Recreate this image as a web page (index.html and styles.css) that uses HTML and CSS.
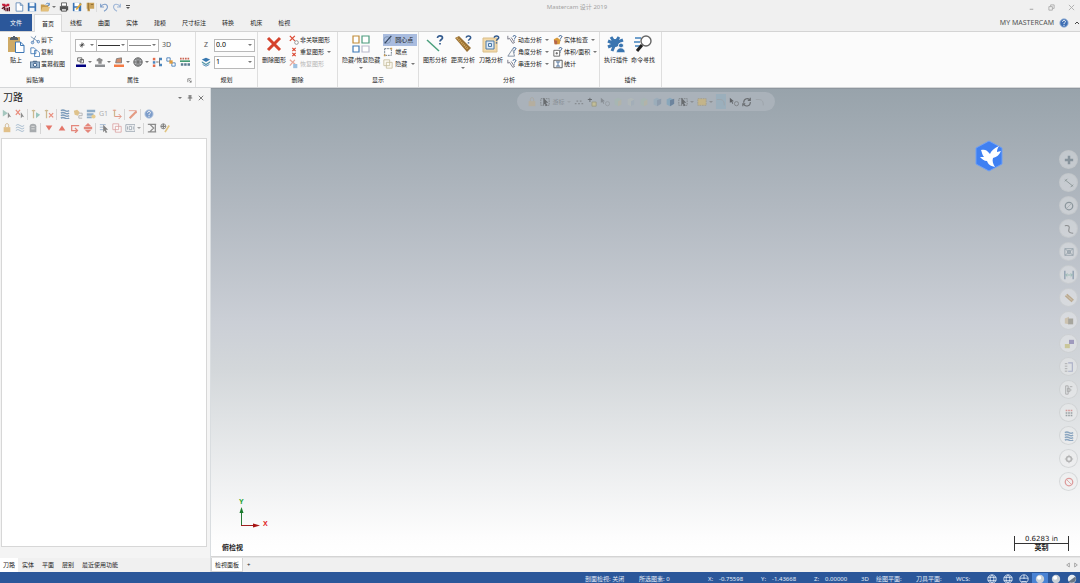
FILE: index.html
```html
<!DOCTYPE html>
<html lang="zh-CN">
<head>
<meta charset="utf-8">
<title>Mastercam 设计 2019</title>
<link rel="stylesheet" href="styles.css">
</head>
<body>
<svg class="sprite" aria-hidden="true">
  <symbol id="logo" viewBox="0 0 12 12"><path d="M1 2h4l1 2 1-2h3v3H7L6 7 5 5H2z" fill="#c41e3a"/><path d="M1 8l3-2v4M6 7v4M8 7v4M10 6v5" stroke="#5b1020" stroke-width="1.5" fill="none"/></symbol>
  <symbol id="new" viewBox="0 0 12 12"><path d="M2.500 1h5l3 3v7h-8zM7.500 1v3h3" fill="#fff" stroke="#5b86b5"/></symbol>
  <symbol id="save" viewBox="0 0 12 12"><path d="M1 1h9l1 1v9H1z" fill="#3b74b5"/><path d="M3 1h6v4H3zM3 7h6v4H3z" fill="#f2f6fa"/></symbol>
  <symbol id="open" viewBox="0 0 12 12"><path d="M1 3h4l1 1h4v7H1z" fill="#c79b4c"/><path d="M1 11l2-5h9l-2 5z" fill="#e4c07a"/><path d="M7 3c1-2 3-2 4 0M11 1v3H9" stroke="#3b74b5" fill="none"/></symbol>
  <symbol id="print" viewBox="0 0 12 12"><path d="M3 1h6v4H3z" fill="#fff" stroke="#555"/><path d="M1 5h10v5H1z" fill="#555"/><path d="M3 8h6v3H3z" fill="#ddd" stroke="#444"/></symbol>
  <symbol id="savepen" viewBox="0 0 12 12"><path d="M1 1h10v10H1z" fill="#3b74b5"/><path d="M3 1h6v4H3zM3 7h5v4H3z" fill="#fff"/><path d="M5 9l6-7" stroke="#e2a838" stroke-width="2"/></symbol>
  <symbol id="zip" viewBox="0 0 12 12"><path d="M2 1h9v7H6v3H3V8H2z" fill="#c9a25a"/><path d="M4 1v9M7 3h3" stroke="#8c6930"/></symbol>
  <symbol id="undo" viewBox="0 0 12 12"><path d="M2 2v4h4M2 6c3-5 9-4 8 1-.5 2-2 3-4 4" fill="none" stroke="#7c9cc8" stroke-width="1.300"/></symbol>
  <symbol id="redo" viewBox="0 0 12 12"><path d="M10 2v4H6M10 6C7 1 1 2 2 7c.5 2 2 3 4 4" fill="none" stroke="#9db5d6" stroke-width="1.300"/></symbol>
  <symbol id="help" viewBox="0 0 12 12"><circle cx="6" cy="6" r="5" fill="#3f6fb4" stroke="#9fb8da"/><path d="M4.300 4.500c0-2.300 3.600-2.200 3.400 0C7.600 5.600 6 5.600 6 7.200M6 8.200v1.200" stroke="#fff" fill="none" stroke-width="1.200"/></symbol>
  <symbol id="paste" viewBox="0 0 18 18"><path d="M1 2h12v15H1z" fill="#cfaa66"/><path d="M4 3V2h2V1h2v1h2v1h1v2H3V3z" fill="#55606c"/><path d="M8.500 7h5l3.500 3.500V17.500H8.500zM13.500 7v3.500H17" fill="#fff" stroke="#3e77b5"/></symbol>
  <symbol id="cut" viewBox="0 0 12 12"><path d="M1 2l9 6M3 9l4-8" stroke="#6f8cab"/><circle cx="3" cy="9" r="1.500" fill="none" stroke="#3b74b5"/><circle cx="10" cy="8" r="1.500" fill="none" stroke="#3b74b5"/></symbol>
  <symbol id="copy" viewBox="0 0 12 12"><path d="M1 1h4l2 2v5H1zM5.500 4h3l3 3v4.500h-6z" fill="#fff" stroke="#3e77b5"/></symbol>
  <symbol id="cam" viewBox="0 0 12 12"><path d="M0 3h3l1-1h4l1 1h3v8H0z" fill="#53708f"/><path d="M1 4h10v6H1z" fill="#9fb9d3"/><circle cx="6" cy="7" r="2" fill="#fff" stroke="#244a78"/></symbol>
  <symbol id="star" viewBox="0 0 12 12"><path d="M6 3v6M3 6h6M4 8l4-4" stroke="#333"/></symbol>
  <symbol id="wirecolor" viewBox="0 0 12 12"><path d="M2 1h5v4H2zM5 3h4v4H5z" fill="#fff" stroke="#555"/><path d="M0 9h12v3H0z" fill="#000080"/></symbol>
  <symbol id="solidcolor" viewBox="0 0 12 12"><path d="M2 3l3-2 4 2v2H8v3H4V5H2z" fill="#8b8b8b"/><path d="M0 9h12v3H0z" fill="#8a8d90"/></symbol>
  <symbol id="surfcolor" viewBox="0 0 12 12"><path d="M3 2l6-1v6H2z" fill="#ce8c6d" stroke="#777"/><path d="M0 9h12v3H0z" fill="#f47b45"/></symbol>
  <symbol id="globe" viewBox="0 0 12 12"><circle cx="6" cy="6" r="5" fill="#b5b8bb" stroke="#444"/><path d="M1 6h10M6 1v10M3 2c3 3 3 5 0 8M9 2c-3 3-3 5 0 8" fill="none" stroke="#666"/></symbol>
  <symbol id="attr1" viewBox="0 0 12 12"><path d="M1 1h3v3H1z" fill="#e46c4c"/><path d="M1 5h3v3H1z" fill="#4c86bd"/><path d="M1 9h3v3H1z" fill="#e46c4c"/><path d="M5 6h3M9 1v10" stroke="#555"/><path d="M9 1h3v3H9zM9 8h3v3H9z" fill="#4c86bd"/></symbol>
  <symbol id="attr2" viewBox="0 0 12 12"><path d="M1 1h4v4H1zM7 7h4v4H7z" fill="#fff" stroke="#3d77b3"/><path d="M4 4h4v4H4z" fill="#df9b3e"/></symbol>
  <symbol id="attr3" viewBox="0 0 12 12"><path d="M0 2h12" stroke="#cc6655" stroke-width="2" stroke-dasharray="2 1"/><path d="M0 5h12" stroke="#449c72" stroke-width="2"/><path d="M1 9h3M5 9h3M9 9h3" stroke="#5a7a90" stroke-width="3"/></symbol>
  <symbol id="layers" viewBox="0 0 12 12"><path d="M1 3l5-2 5 2-5 3z" fill="#3878b0"/><path d="M1 5l5 3 5-3v2l-5 3-5-3z" fill="#5596a8"/><path d="M2 9l4 2 4-2" fill="none" stroke="#3878b0"/></symbol>
  <symbol id="bigx" viewBox="0 0 18 18"><path d="M3 3l12 12M15 3L3 15" stroke="#d5432d" stroke-width="3"/></symbol>
  <symbol id="delA" viewBox="0 0 12 12"><path d="M1 1l6 6M7 1L1 7" stroke="#dc4b35" stroke-width="1.500"/><circle cx="9" cy="9" r="2.200" fill="#fff" stroke="#888"/></symbol>
  <symbol id="delB" viewBox="0 0 12 12"><path d="M4 1l4 4M8 1L4 5M4 7l4 4M8 7l-4 4" stroke="#dc4b35" stroke-width="1.500"/></symbol>
  <symbol id="delC" viewBox="0 0 12 12"><path d="M1 1l7 6M7 1L1 8" stroke="#e6a79a" stroke-width="1.500"/><path d="M5 6h5v5H5z" fill="#9dc0e0"/></symbol>
  <symbol id="hide4" viewBox="0 0 18 18" fill="#fff" stroke-width="1.200"><path d="M1 1h6v7H1z" stroke="#c08b39"/><path d="M10 1h7v7h-7z" stroke="#4c9b7e"/><path d="M1 11h6v6H1z" stroke="#3f79b5"/><path d="M10 11h7v6h-7z" stroke="#bbc"/></symbol>
  <symbol id="arcpt" viewBox="0 0 12 12"><circle cx="5" cy="6" r="4" fill="none" stroke="#7790b0"/><path d="M2 10l8-9" stroke="#33445e" stroke-width="1.500"/></symbol>
  <symbol id="endpt" viewBox="0 0 12 12"><path d="M2 2h8v8H2z" fill="#fff" stroke="#4f6171" stroke-dasharray="2 1"/><path d="M1 9h2v2H1zM9 1h2v2H9z" fill="#d09b49"/></symbol>
  <symbol id="blank" viewBox="0 0 12 12"><path d="M1 1h7v7H1zM4 4h7v7H4z" fill="#fcfaf2" stroke="#c5bd9e"/></symbol>
  <symbol id="q" viewBox="0 0 8 10"><path d="M1.500 3c0-3 5-2.500 5 0C6.500 4.500 4 4.500 4 6.500M4 8v1.500" fill="none" stroke="#345b8e" stroke-width="1.700"/></symbol>
  <symbol id="anaLine" viewBox="0 0 18 18"><path d="M1 5l12 11" stroke="#4a9f7c" stroke-width="1.500"/><use href="#q" x="10" y="0" width="8" height="10"/></symbol>
  <symbol id="anaDist" viewBox="0 0 18 18"><path d="M1 3l4-2 12 12-4 4z" fill="#987035"/><path d="M3 3l11 11" stroke="#d8ae63" stroke-dasharray="1 1" stroke-width="2"/><use href="#q" x="11" y="0" width="7" height="9"/></symbol>
  <symbol id="anaPath" viewBox="0 0 18 18"><path d="M1 3h14v14H1z" fill="#f2d9a9" stroke="#d9bd88"/><path d="M4 6h8v8H4z" fill="#dce9f5" stroke="#4c7aa8"/><path d="M6.500 8.500h3v3h-3z" fill="none" stroke="#4c7aa8"/><use href="#q" x="11" y="0" width="7" height="9"/></symbol>
  <symbol id="anaDyn" viewBox="0 0 12 12"><path d="M1 1v4l2-1 4 6 2-1-4-6" fill="#fff" stroke="#667"/><use href="#q" x="6" y="0" width="6" height="7"/></symbol>
  <symbol id="anaAng" viewBox="0 0 12 12"><path d="M7 2L1 11h8L7 3" fill="none" stroke="#718196"/><use href="#q" x="6" y="0" width="6" height="7"/></symbol>
  <symbol id="anaSolid" viewBox="0 0 12 12"><path d="M1 5l4-2 4 3-1 5H2z" fill="#d99b3c"/><path d="M1 6l4 1v4H2z" fill="#b5654a"/><use href="#q" x="6" y="0" width="6" height="7"/></symbol>
  <symbol id="anaVol" viewBox="0 0 12 12"><path d="M1 4h7v7H1z" fill="#fff" stroke="#555"/><path d="M3 7.500h3M4.500 6v3" stroke="#555"/><use href="#q" x="6" y="0" width="6" height="7"/></symbol>
  <symbol id="stats" viewBox="0 0 12 12"><path d="M1 1.500h10v9H1z" fill="#fff" stroke="#444"/><path d="M3.500 3.500h5M6 3.500v5M3.500 8.500h5" stroke="#345b8e"/></symbol>
  <symbol id="addin" viewBox="0 0 18 18"><path d="M8 8L4 2M8 8L12 2M8 8l8-3M8 9L1 6M8 9l-7 3M8 9l-3 7" stroke="#3a75b0" stroke-width="3"/><circle cx="8" cy="8" r="4" fill="#3a75b0"/><circle cx="14" cy="10.500" r="2.500" fill="#3a75b0" stroke="#fbfbfb"/><path d="M9.500 17.500c0-6 8.500-6 8.500 0z" fill="#3a75b0" stroke="#fbfbfb" stroke-width=".5"/></symbol>
  <symbol id="find" viewBox="0 0 18 18"><path d="M1 3h6M0 7h6M1 11h5" stroke="#4383bd" stroke-width="1.400"/><circle cx="12" cy="6" r="5" fill="#fff" stroke="#666" stroke-width="1.400"/><path d="M8 10l-5 6" stroke="#222" stroke-width="3"/></symbol>
  <symbol id="selall" viewBox="0 0 12 12"><path d="M1 1l6 4-6 4z" fill="#7db0a4"/><path d="M7 4v7l2-2 2 1-3-5" fill="#555"/></symbol>
  <symbol id="selx" viewBox="0 0 12 12"><path d="M1 1l5 6M6 1L1 7" stroke="#e3563c" stroke-width="1.500"/><path d="M7 4v7l2-2 2 1-3-5" fill="#555"/></symbol>
  <symbol id="regen" viewBox="0 0 12 12"><path d="M3 1v10M1 2h4" stroke="#b99a5c" stroke-width="1.500"/><path d="M6 4l5 3-5 4z" fill="#67aca0"/></symbol>
  <symbol id="regx" viewBox="0 0 12 12"><path d="M3 1v10M1 2h4" stroke="#b99a5c" stroke-width="1.500"/><path d="M6 5l5 5M11 5l-5 5" stroke="#e3563c" stroke-width="1.500"/></symbol>
  <symbol id="waves" viewBox="0 0 12 12"><path d="M1 2q2.500-1.500 5 0t5 0M1 5q2.500-1.500 5 0t5 0M1 8q2.500-1.500 5 0t5 0M1 11q2.500-1.500 5 0t5 0" stroke="#3d6d9d" fill="none" stroke-width="1.700"/></symbol>
  <symbol id="thin" viewBox="0 0 12 12"><path d="M1 3q2.500-2.500 5 0t5 0M1 6q2.500-2.500 5 0t5 0M1 9q2.500-2.500 5 0t5 0" stroke="#6f93b5" fill="none"/></symbol>
  <symbol id="verify" viewBox="0 0 12 12"><path d="M1 2l4-1 3 3-2 4-4-1z" fill="#d5a955"/><path d="M7 5h4v3H7v3h4" fill="none" stroke="#999" stroke-width="1.200"/></symbol>
  <symbol id="sim" viewBox="0 0 12 12"><path d="M1 1h10v3H1zM1 5h8v3H1zM1 9h6v2H1z" fill="#5786b2"/><circle cx="9" cy="9" r="2.500" fill="#dfb75c"/></symbol>
  <symbol id="feed" viewBox="0 0 12 12"><path d="M3 1v8" stroke="#b99a5c" stroke-width="1.500"/><path d="M1 1.500h4M3 9h8M8 6l3 3-3 3" stroke="#dd6d53" fill="none" stroke-width="1.200"/></symbol>
  <symbol id="wand" viewBox="0 0 12 12"><path d="M2 11l8-8" stroke="#dc6b45" stroke-width="2.500"/><path d="M1 2h9v3" stroke="#dc6b55" fill="none"/></symbol>
  <symbol id="lock" viewBox="0 0 12 12"><path d="M2 5h8v6H2z" fill="#d7a550"/><path d="M4 5V3c0-3 4-3 4 0v2" stroke="#b18a4b" fill="none"/></symbol>
  <symbol id="ghost" viewBox="0 0 12 12"><path d="M2 11V4c0-4 8-4 8 0v7z" fill="#7f8589"/><path d="M4 4h4M4 7h4" stroke="#ddd"/></symbol>
  <symbol id="down" viewBox="0 0 12 12"><path d="M2 3h8l-4 6z" fill="#dd3320"/></symbol>
  <symbol id="up" viewBox="0 0 12 12"><path d="M2 9h8L6 3z" fill="#dd3320"/></symbol>
  <symbol id="insert" viewBox="0 0 12 12"><path d="M11 3H2v6h6M6 6l3 3-3 3" stroke="#dd4d3c" fill="none" stroke-width="1.500"/></symbol>
  <symbol id="scroll" viewBox="0 0 12 12"><path d="M6 0l4 4H2zM6 12l4-4H2z" fill="#dd4d3c"/><path d="M1 6h10" stroke="#dd4d3c" stroke-width="3"/></symbol>
  <symbol id="cursor" viewBox="0 0 12 12"><path d="M1 2h7M1 5h4M1 8h4" stroke="#5b86b5"/><path d="M5 2l6 6H8l2 3-2 1-1-3-2 2z" fill="#444"/></symbol>
  <symbol id="boxcursor" viewBox="0 0 12 12"><path d="M1 2h10v8H1z" fill="none" stroke="#555" stroke-dasharray="2 1"/><path d="M4 1l6 6H7l2 3-2 1-1-3-2 2z" fill="#333"/></symbol>
  <symbol id="stack" viewBox="0 0 12 12"><path d="M1 1h7v7H1zM4 4h7v7H4z" fill="#fff" stroke="#c77"/></symbol>
  <symbol id="cols" viewBox="0 0 12 12"><path d="M1 2h11v8H1z" fill="#fff" stroke="#678"/><path d="M3 4v4M5 4h3v4H5zM10 4v4" stroke="#678" fill="none"/></symbol>
  <symbol id="sheet" viewBox="0 0 12 12"><path d="M1 1.500h10M1 10.500h10M3 1l5 5-5 5M10 1v10" stroke="#555" stroke-width="1.500" fill="none"/></symbol>
  <symbol id="check" viewBox="0 0 12 12"><circle cx="4" cy="4" r="3" fill="#fff" stroke="#444"/><path d="M4 1v3H1M4 7V4h3" stroke="#444" stroke-width="1.500" fill="none"/><path d="M6 11l5-8" stroke="#d8ab45" stroke-width="2"/></symbol>
  <symbol id="pin" viewBox="0 0 8 8"><path d="M2 1h4M3 1v3M5 1v3M1 4h6M4 4v4" stroke="#666" stroke-width="1.200"/></symbol>
  <symbol id="close" viewBox="0 0 8 8"><path d="M1 1l6 6M7 1L1 7" stroke="currentColor"/></symbol>
  <symbol id="gold" viewBox="0 0 12 12"><path d="M1 2h10v8H1z" fill="#d8b763" stroke="#9a8c6b" stroke-dasharray="2 1"/></symbol>
  <symbol id="cube" viewBox="0 0 12 12"><path d="M2 3l4-2 4 2v6l-4 2-4-2z" fill="#c5c8b5"/><path d="M6 5l4-2v6l-4 2z" fill="#8fa5b4"/></symbol>
  <symbol id="cubeg" viewBox="0 0 12 12"><path d="M2 3l4-2 4 2v6l-4 2-4-2z" fill="#9fc49f"/><path d="M6 5l4-2v6l-4 2z" fill="#ccb97a"/></symbol>
  <symbol id="cubeb" viewBox="0 0 12 12"><path d="M2 3l4-2 4 2v6l-4 2-4-2z" fill="#6f9fbd"/><path d="M6 4l5-2v6l-5 3z" fill="#3c5f86"/></symbol>
  <symbol id="corner" viewBox="0 0 12 12"><path d="M1 3h5M3.500 1v5" stroke="#222"/><path d="M6 6h5v5H6z" fill="#d6c77c" stroke="#8c8455"/></symbol>
  <symbol id="invert" viewBox="0 0 12 12"><path d="M1 1l5 4-2 0 1 3-1 0-1-2-2 1z" fill="#222"/><circle cx="9" cy="8" r="2.500" fill="none" stroke="#555"/></symbol>
  <symbol id="rotate" viewBox="0 0 12 12"><path d="M2 7c0-6 6-6 8-3M10 1v3H7M10 6c0 6-7 6-8 2M1 11V8h3" fill="none" stroke="#333" stroke-width="1.300"/></symbol>
  <symbol id="arc" viewBox="0 0 12 12"><path d="M1 3h4c4 0 5 3 5 7" fill="none" stroke="#777"/></symbol>
  <symbol id="plus" viewBox="0 0 12 12"><path d="M6 1v10M1 6h10" stroke="#556874" stroke-width="3"/></symbol>
  <symbol id="line" viewBox="0 0 12 12"><path d="M1 2l10 8M1 4l3-3M8 11l3-3" stroke="#53645f"/></symbol>
  <symbol id="circ" viewBox="0 0 12 12"><circle cx="6" cy="6" r="4.500" fill="none" stroke="#596a72" stroke-width="1.500"/><path d="M3 9l6-6" stroke="#8b9799"/></symbol>
  <symbol id="spline" viewBox="0 0 12 12"><path d="M1 2c5-1 6 1 5 4s0 5 5 5" fill="none" stroke="#555" stroke-width="1.300"/></symbol>
  <symbol id="box" viewBox="0 0 12 12"><path d="M1 2h10v8H1zM1 2l10 8M11 2L1 10" fill="none" stroke="#667985"/><circle cx="6" cy="6" r="2" fill="none" stroke="#667985"/></symbol>
  <symbol id="dim" viewBox="0 0 12 12"><path d="M1 1v10M11 1v10" stroke="#4d6a88" stroke-width="1.500"/><path d="M2 6h8M4 4L2 6l2 2M8 4l2 2-2 2" stroke="#5b9b8b" fill="none"/></symbol>
  <symbol id="ruler" viewBox="0 0 12 12"><path d="M1 4l3-3 8 7-3 3z" fill="#a68551"/><path d="M3 3l7 6" stroke="#eee" stroke-dasharray="1 1"/></symbol>
  <symbol id="solid" viewBox="0 0 12 12"><path d="M1 3l5-2v9l-5-1z" fill="#c4b08b"/><path d="M5 3h6v7H5z" fill="#7f7a69"/></symbol>
  <symbol id="pair" viewBox="0 0 12 12"><path d="M6 1h6v5H6z" fill="#6f63a0"/><path d="M1 6h6v5H1z" fill="#bdb45f"/></symbol>
  <symbol id="list" viewBox="0 0 12 12"><path d="M5 1h5v10H5" fill="none" stroke="#8188b1" stroke-width="1.300"/><path d="M1 2h3M1 5h3M1 8h3M1 11h3" stroke="#777"/></symbol>
  <symbol id="tree" viewBox="0 0 12 12"><path d="M2 1h3v10H2zM7 2h3M7 6h2M4 4h3v4H4z" fill="none" stroke="#777"/></symbol>
  <symbol id="points" viewBox="0 0 12 12"><path d="M1 8h2M5 8h2M9 8h2M3 5h2M7 5h2" stroke="#555" stroke-width="1.500"/></symbol>
  <symbol id="grid" viewBox="0 0 12 12"><path d="M2 3h9" stroke="#c85b5b" stroke-width="2" stroke-dasharray="2 1"/><path d="M2 6h9M2 9h9" stroke="#5b676b" stroke-width="2" stroke-dasharray="2 1"/></symbol>
  <symbol id="gear" viewBox="0 0 12 12"><circle cx="6" cy="6" r="3" fill="none" stroke="#888" stroke-width="2"/><path d="M6 1v2M6 9v2M1 6h2M9 6h2" stroke="#888"/></symbol>
  <symbol id="no" viewBox="0 0 12 12"><circle cx="6" cy="6" r="4.500" fill="none" stroke="#cf5757" stroke-width="1.500"/><path d="M3 3l6 6" stroke="#cf5757"/></symbol>
  <symbol id="wire" viewBox="0 0 12 12"><circle cx="6" cy="6" r="5" fill="none" stroke="#e6eef8"/><path d="M1 4h10M1 8h10M6 1c-3 3-3 7 0 10M6 1c3 3 3 7 0 10" fill="none" stroke="#e6eef8"/></symbol>
  <symbol id="wirehalf" viewBox="0 0 12 12"><circle cx="6" cy="6" r="5" fill="none" stroke="#e6eef8"/><path d="M1 5h10M6 1v5M3 9h6" fill="none" stroke="#e6eef8"/></symbol>
  <symbol id="ball" viewBox="0 0 12 12"><circle cx="6" cy="6" r="5" fill="#c9d0d7"/><circle cx="5" cy="4.500" r="2.500" fill="#fff"/></symbol>
  <symbol id="ballhalf" viewBox="0 0 12 12"><circle cx="6" cy="6" r="5" fill="#e7ecf1"/><path d="M10 3c3 6-4 10-8 6z" fill="#6b7786"/></symbol>
</svg>

<div class="app">
  <header class="titlebar">
    <div class="quick">
      <svg class="ic"><use href="#logo"/></svg>
      <button aria-label="新建"><svg class="ic"><use href="#new"/></svg></button>
      <button aria-label="保存"><svg class="ic"><use href="#save"/></svg></button>
      <button class="drop" aria-label="打开"><svg class="ic"><use href="#open"/></svg></button>
      <button aria-label="打印"><svg class="ic"><use href="#print"/></svg></button>
      <button aria-label="另存为"><svg class="ic"><use href="#savepen"/></svg></button>
      <button aria-label="打包"><svg class="ic"><use href="#zip"/></svg></button>
      <span class="tick"></span>
      <button aria-label="撤销"><svg class="ic"><use href="#undo"/></svg></button>
      <button aria-label="重做"><svg class="ic"><use href="#redo"/></svg></button>
      <button aria-label="自定义"><svg class="chev" viewBox="0 0 6 6"><path d="M1 1.500h4" stroke="#555"/><path d="M1 3h4L3 5z" fill="#555"/></svg></button>
    </div>
    <h1>Mastercam 设计 2019</h1>
    <div class="winctl">
      <button aria-label="最小化"><svg viewBox="0 0 8 8"><path d="M2 6h4" stroke="#999"/></svg></button>
      <button aria-label="还原"><svg viewBox="0 0 8 8"><path d="M1 3h4v4H1zM3 3V1h4v4H5" fill="none" stroke="#aaa"/></svg></button>
      <button aria-label="关闭"><svg><use href="#close"/></svg></button>
    </div>
  </header>

  <nav class="tabs">
    <button class="file">文件</button>
    <button class="active">首页</button>
    <button>线框</button><button>曲面</button><button>实体</button><button>建模</button>
    <button>尺寸标注</button><button>转换</button><button>机床</button><button>检视</button>
    <div class="account"><a href="#">MY MASTERCAM</a><button aria-label="帮助"><svg class="ic"><use href="#help"/></svg></button><button aria-label="折叠"><svg class="chev" viewBox="0 0 6 6"><path d="M1 4l2-2 2 2" fill="none" stroke="#444"/></svg></button></div>
  </nav>

  <div class="ribbon">
    <section class="group g-clip">
      <div class="tools">
        <button class="big"><svg><use href="#paste"/></svg>贴上</button>
        <div class="stack">
          <button><svg class="ic"><use href="#cut"/></svg>剪下</button>
          <button><svg class="ic"><use href="#copy"/></svg>复制</button>
          <button><svg class="ic"><use href="#cam"/></svg>萤幕截图</button>
        </div>
      </div>
      <h2>剪贴簿</h2>
    </section>
    <section class="group g-attr">
      <div class="tools rows">
        <div class="line">
          <button class="combo narrow" aria-label="点型"><svg class="ic"><use href="#star"/></svg></button>
          <button class="combo" aria-label="线型"><span class="stroke thick"></span></button>
          <button class="combo" aria-label="线宽"><span class="stroke"></span></button>
          <button class="mode">3D</button>
        </div>
        <div class="line icons">
          <button class="drop" aria-label="线框颜色"><svg class="ic"><use href="#wirecolor"/></svg></button>
          <button class="drop" aria-label="实体颜色"><svg class="ic"><use href="#solidcolor"/></svg></button>
          <button class="drop" aria-label="曲面颜色"><svg class="ic"><use href="#surfcolor"/></svg></button>
          <button class="drop" aria-label="材质"><svg class="ic"><use href="#globe"/></svg></button>
          <button aria-label="设置全部"><svg class="ic"><use href="#attr1"/></svg></button>
          <button aria-label="清除颜色"><svg class="ic"><use href="#attr2"/></svg></button>
          <button aria-label="线型管理"><svg class="ic"><use href="#attr3"/></svg></button>
        </div>
      </div>
      <h2>属性</h2>
      <button class="launch" aria-label="属性选项"><svg viewBox="0 0 6 6"><path d="M1 5V1h4M2.500 2.500L5 5M5 3v2H3" fill="none" stroke="#777"/></svg></button>
    </section>
    <section class="group g-plan">
      <div class="tools rows">
        <div class="line"><label class="zlab" for="z">Z</label><span class="field"><input id="z" value="0.0"><i></i></span></div>
        <div class="line"><label for="lv" aria-label="层别"><svg class="ic"><use href="#layers"/></svg></label><span class="field"><input id="lv" value="1"><i></i></span></div>
      </div>
      <h2>规划</h2>
    </section>
    <section class="group g-del">
      <div class="tools">
        <button class="big"><svg><use href="#bigx"/></svg>删除图形</button>
        <div class="stack">
          <button><svg class="ic"><use href="#delA"/></svg>非关联图形</button>
          <button class="drop"><svg class="ic"><use href="#delB"/></svg>重复图形</button>
          <button disabled><svg class="ic"><use href="#delC"/></svg>恢复图形</button>
        </div>
      </div>
      <h2>删除</h2>
    </section>
    <section class="group g-show">
      <div class="tools">
        <button class="big menu"><svg><use href="#hide4"/></svg>隐藏/恢复隐藏</button>
        <div class="stack">
          <button class="on"><svg class="ic"><use href="#arcpt"/></svg>圆心点</button>
          <button><svg class="ic"><use href="#endpt"/></svg>端点</button>
          <button class="drop"><svg class="ic"><use href="#blank"/></svg>隐藏</button>
        </div>
      </div>
      <h2>显示</h2>
    </section>
    <section class="group g-ana">
      <div class="tools">
        <button class="big"><svg><use href="#anaLine"/></svg>图形分析</button>
        <button class="big menu"><svg><use href="#anaDist"/></svg>距离分析</button>
        <button class="big"><svg><use href="#anaPath"/></svg>刀路分析</button>
        <div class="stack">
          <button class="drop"><svg class="ic"><use href="#anaDyn"/></svg>动态分析</button>
          <button class="drop"><svg class="ic"><use href="#anaAng"/></svg>角度分析</button>
          <button class="drop"><svg class="ic"><use href="#anaDyn"/></svg>串连分析</button>
        </div>
        <div class="stack">
          <button class="drop"><svg class="ic"><use href="#anaSolid"/></svg>实体检查</button>
          <button class="drop"><svg class="ic"><use href="#anaVol"/></svg>体积/面积</button>
          <button><svg class="ic"><use href="#stats"/></svg>统计</button>
        </div>
      </div>
      <h2>分析</h2>
    </section>
    <section class="group g-add">
      <div class="tools">
        <button class="big"><svg><use href="#addin"/></svg>执行插件</button>
        <button class="big"><svg><use href="#find"/></svg>命令寻找</button>
      </div>
      <h2>插件</h2>
    </section>
  </div>

  <main class="work">
    <aside class="panel">
      <div class="phead"><h2>刀路</h2><button class="drop" aria-label="菜单"></button><button aria-label="固定"><svg><use href="#pin"/></svg></button><button aria-label="关闭"><svg><use href="#close"/></svg></button></div>
      <div class="ptools">
        <button aria-label="全选"><svg class="ic"><use href="#selall"/></svg></button><button aria-label="选择失效"><svg class="ic"><use href="#selx"/></svg></button><i></i>
        <button aria-label="重建"><svg class="ic"><use href="#regen"/></svg></button><button aria-label="重建失效"><svg class="ic"><use href="#regx"/></svg></button><i></i>
        <button aria-label="模拟"><svg class="ic"><use href="#waves"/></svg></button><button aria-label="验证"><svg class="ic"><use href="#verify"/></svg></button><button aria-label="仿真"><svg class="ic"><use href="#sim"/></svg></button><button class="g1">G1</button><button aria-label="进给"><svg class="ic"><use href="#feed"/></svg></button><i></i>
        <button aria-label="编辑"><svg class="ic"><use href="#wand"/></svg></button><i></i><button aria-label="帮助"><svg class="ic"><use href="#help"/></svg></button>
      </div>
      <div class="ptools">
        <button aria-label="锁定"><svg class="ic"><use href="#lock"/></svg></button><button aria-label="显示刀路"><svg class="ic"><use href="#thin"/></svg></button><button aria-label="禁用"><svg class="ic"><use href="#ghost"/></svg></button><i></i>
        <button aria-label="下移"><svg class="ic"><use href="#down"/></svg></button><button aria-label="上移"><svg class="ic"><use href="#up"/></svg></button><button aria-label="插入"><svg class="ic"><use href="#insert"/></svg></button><button aria-label="滚动"><svg class="ic"><use href="#scroll"/></svg></button><i></i>
        <button aria-label="选择"><svg class="ic"><use href="#cursor"/></svg></button><button aria-label="组"><svg class="ic"><use href="#stack"/></svg></button><button class="drop" aria-label="显示列"><svg class="ic"><use href="#cols"/></svg></button><i></i>
        <button aria-label="汇总"><svg class="ic"><use href="#sheet"/></svg></button><button aria-label="检查"><svg class="ic"><use href="#check"/></svg></button>
      </div>
      <div class="treebox"></div>
      <nav class="btabs"><button class="active">刀路</button><button>实体</button><button>平面</button><button>层别</button><button>最近使用功能</button></nav>
    </aside>

    <section class="view">
      <div class="canvas">
        <div class="selbar">
          <button aria-label="锁定"><svg class="ic"><use href="#lock"/></svg></button>
          <button class="dark" aria-label="光标"><svg class="ic"><use href="#boxcursor"/></svg></button>
          <button class="drop">游标</button>
          <button class="mid" aria-label="点"><svg class="ic"><use href="#points"/></svg></button>
          <button class="dark" aria-label="快速点"><svg class="ic"><use href="#corner"/></svg></button>
          <button aria-label="选择"><svg class="ic"><use href="#invert"/></svg></button>
          <button aria-label="面"><svg class="ic"><use href="#cubeg"/></svg></button>
          <button aria-label="体"><svg class="ic"><use href="#cube"/></svg></button>
          <button aria-label="边"><svg class="ic"><use href="#cubeg"/></svg></button>
          <button aria-label="背面"><svg class="ic"><use href="#cubeb"/></svg></button>
          <button class="dark" aria-label="实体"><svg class="ic"><use href="#cubeb"/></svg></button>
          <button class="drop dark" aria-label="窗选"><svg class="ic"><use href="#boxcursor"/></svg></button>
          <button class="drop dark" aria-label="范围"><svg class="ic"><use href="#gold"/></svg></button>
          <button class="sel" aria-label="验证"><svg class="ic"><use href="#arc"/></svg></button>
          <button class="dark" aria-label="反选"><svg class="ic"><use href="#invert"/></svg></button>
          <button class="dark" aria-label="旋转"><svg class="ic"><use href="#rotate"/></svg></button>
          <button aria-label="最后"><svg class="ic"><use href="#arc"/></svg></button>
        </div>
        <svg class="bird" viewBox="0 0 30 32"><path d="M15 1l13 7v16l-13 7-13-7V8z" fill="#3f80f2" stroke="#6f9ff5"/><path d="M7 10c4-1 6 0 9 4 1-3 4-6 9-8-2 3-2 5-2 6l4-1c-2 4-4 6-8 7-1 3 0 6 2 9-5-1-7-3-8-6-3 0-5-2-7-4l4 0c-2-2-2-5-3-7z" fill="#fff"/></svg>
        <div class="quickmask">
          <button aria-label="点"><svg><use href="#plus"/></svg></button><button aria-label="线"><svg><use href="#line"/></svg></button><button aria-label="圆"><svg><use href="#circ"/></svg></button><button aria-label="曲线"><svg><use href="#spline"/></svg></button><button aria-label="线框"><svg><use href="#box"/></svg></button><button aria-label="标注"><svg><use href="#dim"/></svg></button><button aria-label="曲面"><svg><use href="#ruler"/></svg></button><button aria-label="实体"><svg><use href="#solid"/></svg></button><button aria-label="颜色"><svg><use href="#pair"/></svg></button><button aria-label="层别"><svg><use href="#list"/></svg></button><button aria-label="群组"><svg><use href="#tree"/></svg></button><button aria-label="结果"><svg><use href="#grid"/></svg></button><button aria-label="层"><svg><use href="#waves"/></svg></button><button aria-label="设置"><svg><use href="#gear"/></svg></button><button aria-label="清除"><svg><use href="#no"/></svg></button>
        </div>
        <div class="axes"><span class="y">Y</span><svg viewBox="0 0 22 22"><path d="M2.500 20V6" stroke="#267a36"/><path d="M.5 7l2-6 2 6z" fill="#187a2b"/><path d="M2 19.500h13" stroke="#a02020"/><path d="M14 17.500l7 2-7 2z" fill="#a81414"/></svg><span class="x">X</span></div>
        <div class="viewname">俯检视</div>
        <div class="scale"><span class="num">0.6283 in</span><span>英制</span></div>
      </div>
      <nav class="btabs sheet"><button class="active">检视面板</button><button>+</button><span class="arrows"><button aria-label="向左"><svg viewBox="0 0 6 8"><path d="M5 1L1 4l4 3z" fill="none" stroke="#888"/></svg></button><button aria-label="向右"><svg viewBox="0 0 6 8"><path d="M1 1l4 3-4 3z" fill="none" stroke="#888"/></svg></button></span></nav>
    </section>
  </main>

  <footer class="status">
    <button class="sec">剖面检视: 关闭</button><span class="cnt">所选图素: 0</span>
    <span class="ax">X:</span><span class="val">-0.75598</span><span class="ax">Y:</span><span class="val">-1.43668</span><span class="ax">Z:</span><span class="val last">0.00000</span>
    <button class="dim">3D</button><button class="pl">绘图平面:</button><button class="pl">刀具平面:</button><button class="wcs">WCS:</button>
    <span class="shade"><button aria-label="线框"><svg class="ic"><use href="#wire"/></svg></button><button aria-label="隐藏线"><svg class="ic"><use href="#wire"/></svg></button><button aria-label="无隐藏"><svg class="ic"><use href="#wirehalf"/></svg></button><button class="on" aria-label="边框着色"><svg class="ic"><use href="#ball"/></svg></button><button aria-label="着色"><svg class="ic"><use href="#ball"/></svg></button><button aria-label="半透明"><svg class="ic"><use href="#ballhalf"/></svg></button></span>
  </footer>
</div>
</body>
</html>
```

FILE: styles.css
```css
* { box-sizing: border-box; }
body {
  margin: 0;
  font: 6px/8px "Noto Sans", "Noto Sans CJK SC", sans-serif;
  color: #1c1c1c;
}
button {
  display: flex;
  align-items: center;
  flex: none;
  margin: 0;
  padding: 0;
  border: 0;
  background: none;
  color: inherit;
  font: inherit;
  white-space: nowrap;
}
h1, h2 { margin: 0; font: inherit; }
svg { display: block; flex: none; }
.sprite { position: absolute; width: 0; height: 0; }
.ic { width: 10px; height: 10px; }
.drop::after,
.menu::after,
.combo::after,
.field i {
  content: "";
  border: 2px solid transparent;
  border-top-color: #777;
  border-bottom: 0;
}
.drop::after { margin-left: 2px; }

.app {
  display: flex;
  flex-direction: column;
  height: 100vh;
  background: #f0f0f0;
  overflow: hidden;
}

.titlebar {
  display: grid;
  grid-template-columns: 1fr auto 1fr;
  align-items: center;
  height: 14px;
}
.titlebar h1 { color: #a2a2a2; padding-left: 74px; }
.quick { display: flex; align-items: center; gap: 3px; padding-left: 1px; }
.tick { width: 1px; height: 9px; margin: 0 -1px 0 -2px; background: #ddd; }
.winctl { display: flex; justify-content: flex-end; gap: 13px; padding-right: 5px; color: #aaa; }
.winctl svg { width: 7px; height: 7px; }

.tabs { display: flex; height: 18px; border-bottom: 1px solid #d4d4d4; }
.tabs > button { padding: 0 8px; }
.tabs > .file { background: #2b579a; color: #fff; padding: 0 10px; }
.tabs > .active {
  height: 18px;
  margin: 0 0 -1px 2px;
  padding: 0 7px;
  background: #fbfbfb;
  border: 1px solid #d9d9d9;
  border-bottom: 0;
}
.account { display: flex; align-items: center; gap: 5px; margin-left: auto; font-size: 7px; }
.account a { color: #555; text-decoration: none; }
.chev { width: 6px; height: 6px; }

.ribbon { display: flex; height: 56px; background: #fbfbfb; border-bottom: 1px solid #d4d6d8; }
.group {
  position: relative;
  display: flex;
  flex-direction: column;
  padding: 2px 4px;
  border-right: 1px solid #dedede;
}
.group h2 { text-align: center; line-height: 10px; }
.tools { display: flex; gap: 3px; height: 41px; }
.big { flex-direction: column; gap: 3px; height: 38px; padding-top: 1px; }
.big svg { width: 18px; height: 18px; }
.stack { display: flex; flex-direction: column; }
.stack button { height: 12px; gap: 1px; padding-right: 2px; }
.stack button:disabled { color: #b5b5b5; }
.stack .on { background: #a9bcdf; }
.g-clip { width: 71px; }
.g-clip .big { padding-left: 3px; }
.g-clip .tools { gap: 5px; }
.g-attr { width: 125px; }
.g-plan { width: 62px; }
.g-del { width: 80px; }
.g-show { width: 81px; }
.g-show .stack button { gap: 2px; }
.g-ana { width: 181px; }
.g-ana .tools { gap: 4px; }
.g-ana .stack button { padding-right: 0; }
.g-add { width: 62px; }
.rows { flex-direction: column; gap: 5px; padding-top: 5px; }
.line { display: flex; align-items: center; height: 12px; }
.icons { gap: 4px; padding-left: 1px; }
.icons .drop::after { margin-right: -1px; }
.combo, .field {
  display: flex;
  align-items: center;
  justify-content: space-between;
  height: 13px;
  border: 1px solid #b9b9b9;
  background: #fff;
}
.combo { width: 32px; margin-right: -1px; padding: 0 2px 0 1px; }
.narrow { width: 22px; }
.stroke { width: 22px; height: 1px; background: #888; }
.thick { background: #333; }
.mode { font-size: 7px; margin-left: 4px; color: #555; }
.launch { position: absolute; right: 3px; bottom: 4px; }
.launch svg { width: 5px; height: 5px; }
.g-plan .rows { margin-right: -2px; }
.g-plan label { width: 14px; padding-left: 1px; font-size: 7px; color: #555; }
.g-plan .zlab { padding-left: 4px; }
.field { flex: 1; padding-right: 2px; }
.field input { width: 30px; min-width: 0; border: 0; padding: 0 0 0 1px; background: none; font: inherit; font-size: 7px; }

.work { display: flex; flex: 1; min-height: 0; }
.panel { display: flex; flex-direction: column; width: 211px; background: #f4f4f4; border-right: 1px solid #d9dde0; }
.phead { display: flex; align-items: center; gap: 5px; height: 19px; padding: 0 6px 0 3px; color: #555; }
.phead h2 { flex: 1; font-size: 10px; line-height: 19px; color: #222; }
.phead svg { width: 6px; height: 6px; }
.ptools { display: flex; align-items: center; gap: 3px; height: 14px; padding-left: 2px; opacity: .65; }
.ptools i { width: 1px; height: 11px; margin-left: -1px; background: #c5c5c5; }
.g1 { width: 10px; font-size: 7px; color: #888; }
.treebox { flex: 1; margin: 3px 3px 11px 1px; background: #fff; border: 1px solid #d7d7d7; }
.btabs { display: flex; height: 14px; background: #f0f0f0; }
.btabs button { padding: 0 4px; }
.btabs .active { background: #fff; padding: 0 3px; }
.btabs .arrows { display: flex; margin-left: auto; }
.arrows svg { width: 4px; height: 6px; }
.arrows button { padding: 0 2px; }

.view { display: flex; flex-direction: column; flex: 1; min-width: 0; }
.canvas {
  position: relative;
  flex: 1;
  border-top: 1px solid #8e969e;
  border-bottom: 1px solid #d4d4d4;
  background: linear-gradient(#98a3ab 0%, #b1b8c0 25%, #cbcfd6 50%, #d3d7da 60%, #fdfdfd 96%, #fff 100%);
}
.sheet { height: 15px; border-top: 1px solid #e4e4e4; }
.sheet .active { border: 1px solid #d4d4d4; border-top: 0; }
.selbar {
  position: absolute;
  top: 3px;
  left: 50%;
  transform: translateX(-50%);
  display: flex;
  align-items: center;
  gap: 3px;
  height: 19px;
  padding: 0 10px;
  border-radius: 10px;
  background: #aab2ba;
}
.selbar button { opacity: .25; }
.selbar .mid { opacity: .4; }
.selbar .dark { opacity: .55; }
.selbar .sel { background: #6fa7c2; height: 15px; }
.bird { position: absolute; top: 51px; right: 76px; width: 30px; height: 32px; }
.quickmask { position: absolute; top: 61px; right: 2px; display: flex; flex-direction: column; gap: 4px; }
.quickmask button {
  justify-content: center;
  width: 19px;
  height: 19px;
  border: 1px solid rgba(190, 194, 196, .5);
  border-radius: 50%;
  background: rgba(240, 240, 240, .4);
}
.quickmask svg { width: 10px; height: 10px; opacity: .55; }
.axes { position: absolute; left: 28px; bottom: 28px; display: grid; grid-template-columns: 22px 8px; align-items: end; font: bold 7px/8px "Liberation Sans", sans-serif; }
.axes svg { width: 22px; height: 22px; }
.axes .y { grid-column: 1 / 3; color: #1ca02a; }
.axes .x { color: #e02020; padding-left: 2px; }
.viewname { position: absolute; left: 11px; bottom: 4px; font-size: 7px; font-weight: bold; }
.scale {
  position: absolute;
  right: 11px;
  bottom: 5px;
  display: flex;
  flex-direction: column;
  align-items: center;
  width: 55px;
  border: solid #333;
  border-width: 0 1px;
  font-size: 7px;
  font-weight: bold;
  line-height: 7px;
}
.scale .num { width: 100%; text-align: center; border-bottom: 1px solid #333; font-family: "DejaVu Sans", sans-serif; font-weight: normal; }

.status { display: flex; align-items: center; justify-content: flex-end; height: 11px; padding-top: 2px; background: #2b579a; color: #e4ecf7; }
.sec { width: 54px; }
.cnt { width: 69px; }
.ax { width: 11px; }
.val { width: 42px; }
.last { width: 36px; }
.dim { width: 15px; }
.pl { width: 40px; }
.wcs { width: 28px; }
.shade { display: flex; }
.shade button { width: 16px; height: 11px; justify-content: center; }
.shade .on { background: #4a83d4; }
```
